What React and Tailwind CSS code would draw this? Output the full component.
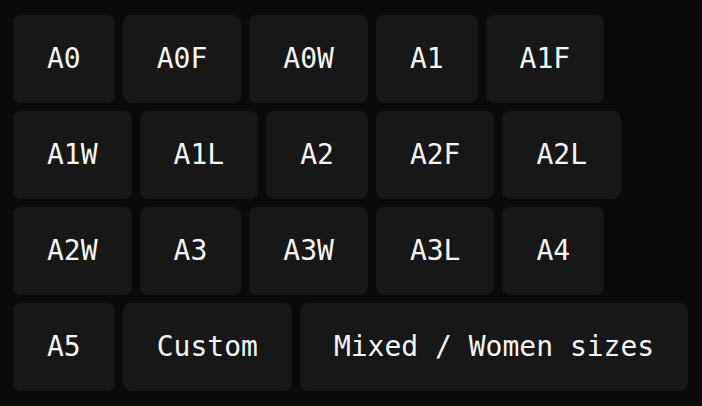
const sizes = [
  'A0', 'A0F', 'A0W', 'A1', 'A1F',
  'A1W', 'A1L', 'A2', 'A2F', 'A2L',
  'A2W', 'A3', 'A3W', 'A3L', 'A4',
  'A5', 'Custom', 'Mixed / Women sizes',
];

export default function App() {
  return (
    <div className="min-h-screen w-[702px] h-[406px] bg-[#0a0a0a] px-[13px] pt-[15px]">
      <div className="flex flex-wrap gap-x-[8px] gap-y-[8px]">
        {sizes.map((s) => (
          <button
            key={s}
            className="h-[88px] px-[34px] rounded-lg bg-[#171717] text-[#f5f5f5] text-[28px] leading-none whitespace-pre"
            style={{ fontFamily: '"DejaVu Sans Mono", monospace' }}
          >
            {s}
          </button>
        ))}
      </div>
    </div>
  );
}
